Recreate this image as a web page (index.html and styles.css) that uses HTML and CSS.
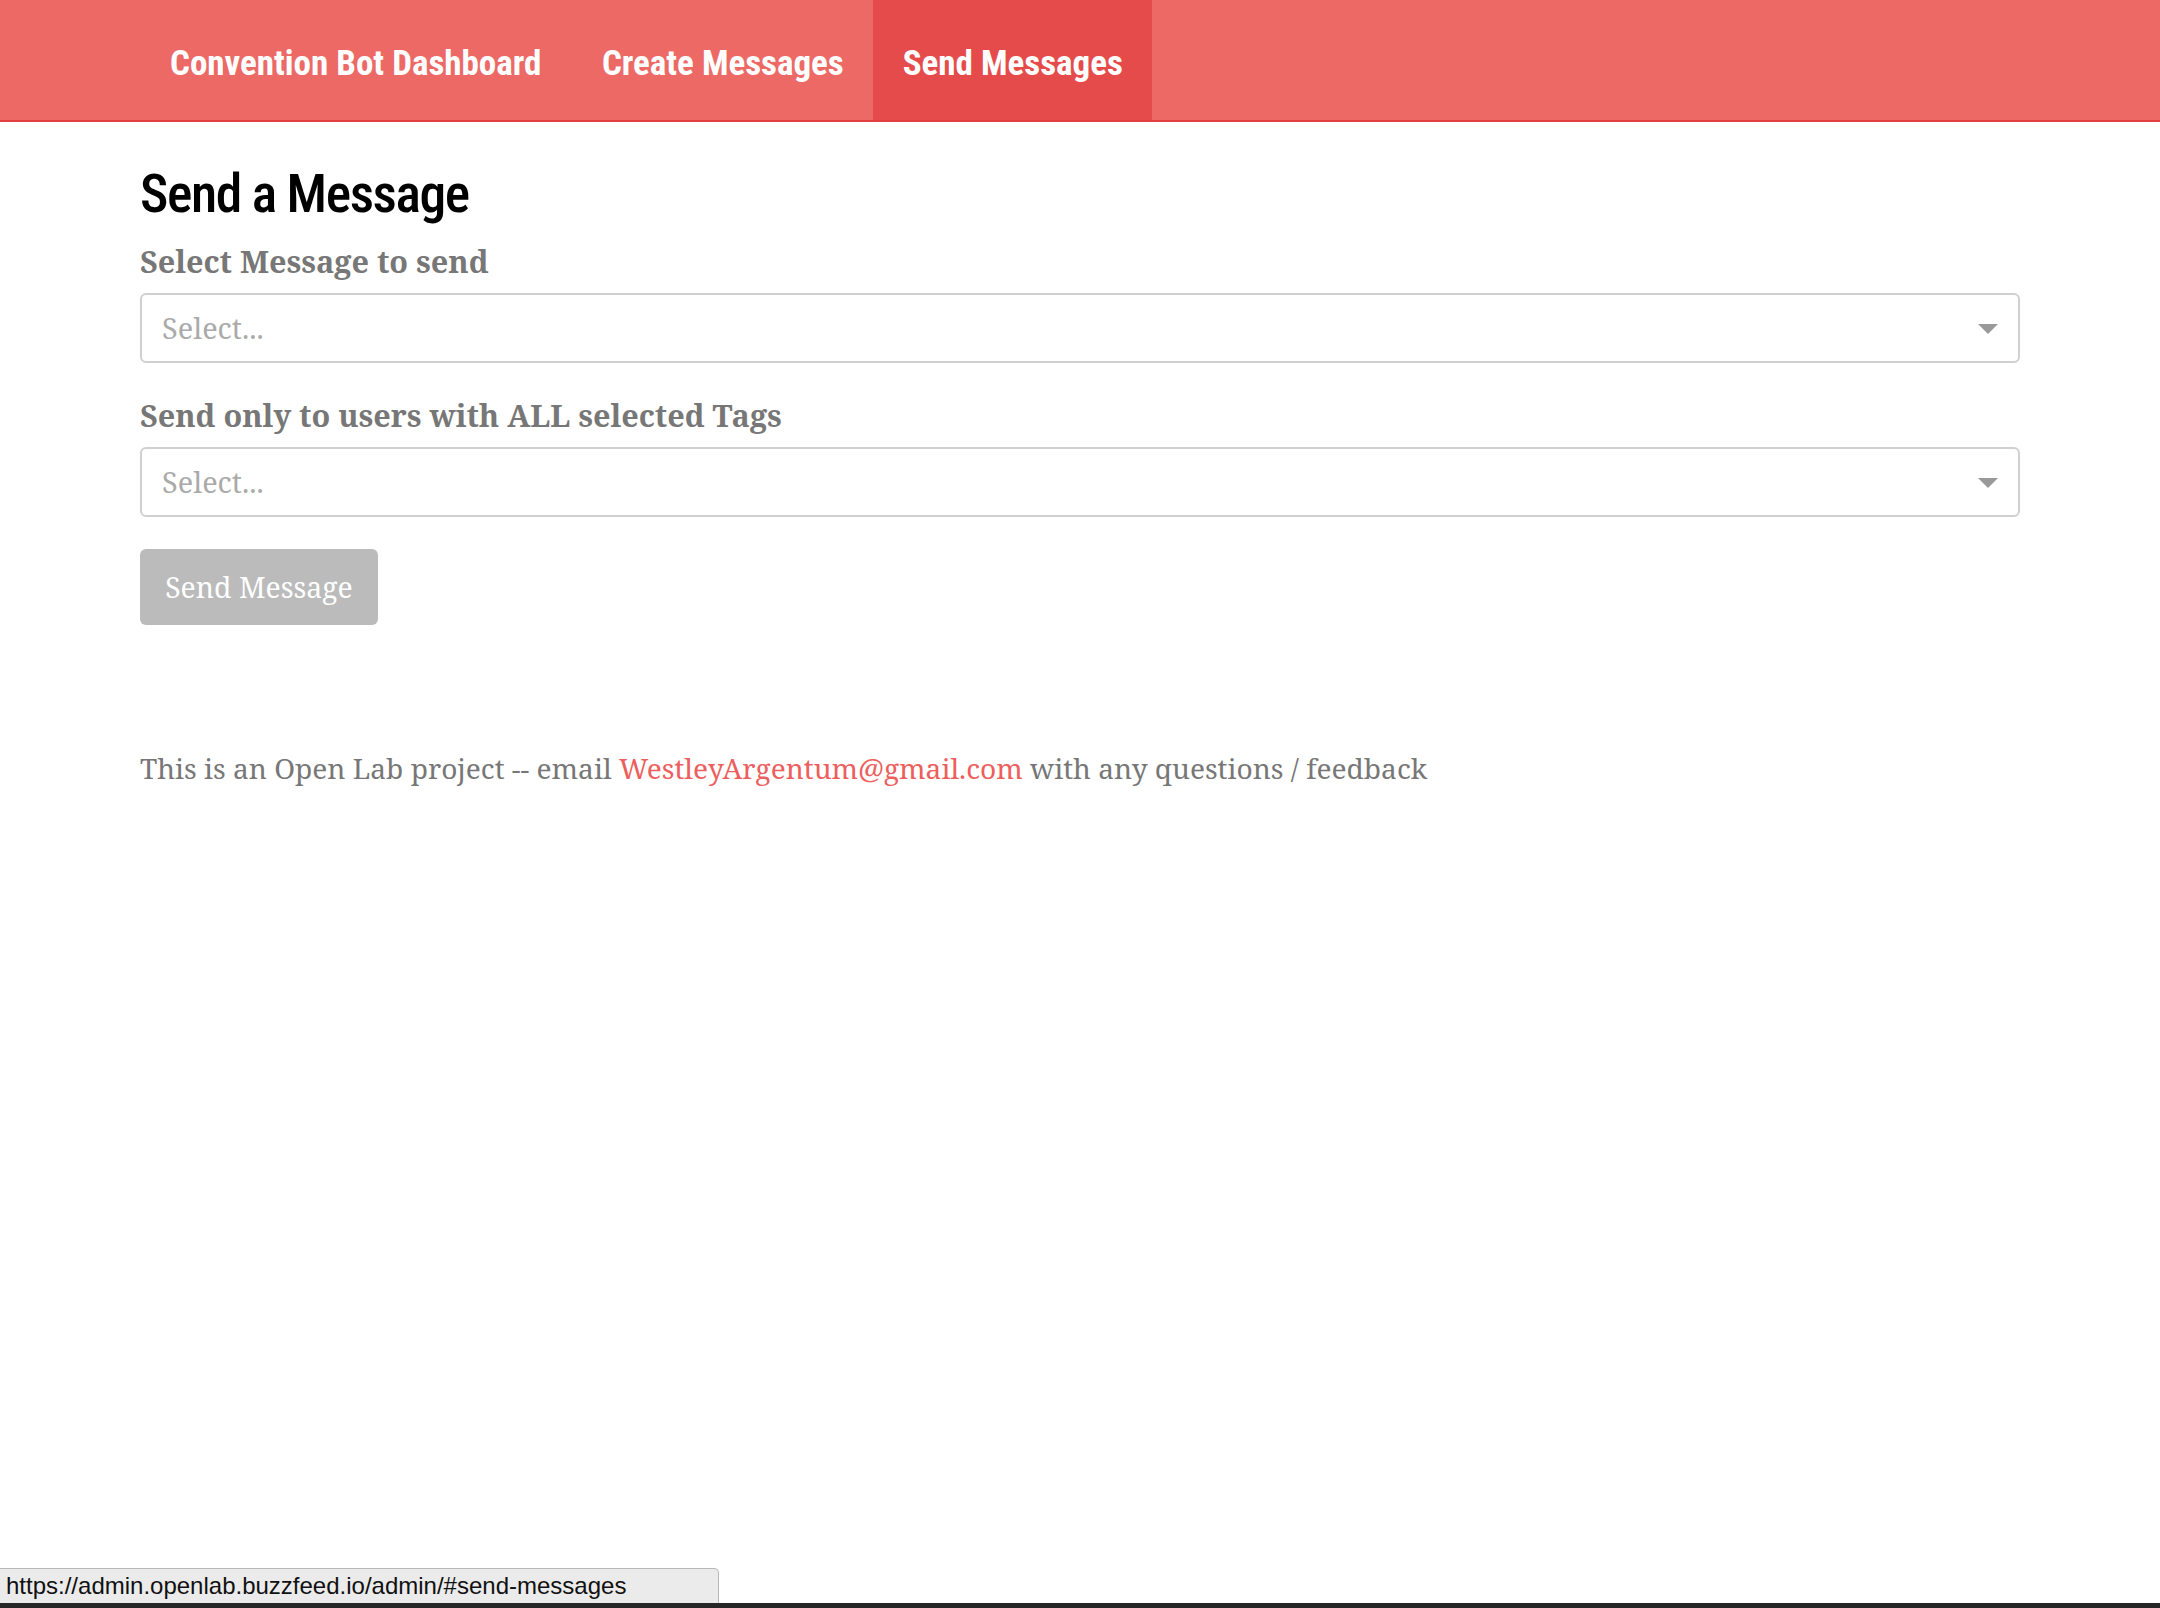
FILE: index.html
```html
<!DOCTYPE html>
<html lang="en">
<head>
<meta charset="utf-8">
<title>Convention Bot Dashboard</title>
<link rel="stylesheet" href="styles.css">
</head>
<body>
<nav class="navbar">
  <div class="nav-inner">
    <a class="nav-link" href="#">Convention Bot Dashboard</a>
    <a class="nav-link" href="#create-messages">Create Messages</a>
    <a class="nav-link active" href="#send-messages">Send Messages</a>
  </div>
</nav>

<main class="content">
  <h1 class="page-title">Send a Message</h1>

  <div class="field">
    <label class="field-label">Select Message to send</label>
    <div class="select-box">
      <span class="placeholder">Select...</span>
      <span class="arrow"></span>
    </div>
  </div>

  <div class="field">
    <label class="field-label">Send only to users with ALL selected Tags</label>
    <div class="select-box">
      <span class="placeholder">Select...</span>
      <span class="arrow"></span>
    </div>
  </div>

  <button class="send-btn" disabled>Send Message</button>

  <p class="footer-note">This is an Open Lab project -- email <a class="mail" href="#">WestleyArgentum@gmail.com</a> with any questions / feedback</p>
</main>

<div class="status-bubble">https://admin.openlab.buzzfeed.io/admin/#send-messages</div>
<div class="bottom-strip"></div>
</body>
</html>
```
FILE: styles.css
```css
html, body {
  margin: 0;
  padding: 0;
  background: #ffffff;
}

body {
  font-family: "Noto Serif", "DejaVu Serif", serif;
  color: #777777;
  min-height: 1608px;
}

/* ---------- navbar ---------- */
.navbar {
  background: #ec6966;
  border-bottom: 2px solid #e2403f;
}

.nav-inner {
  display: flex;
  padding-left: 140px;
  height: 120px;
}

.nav-link {
  display: block;
  padding: 44px 29.5px 36px;
  line-height: 40px;
  font-family: "Roboto Condensed", "Roboto", sans-serif;
  font-weight: 700;
  font-size: 35px;
  color: #ffffff;
  text-decoration: none;
  white-space: nowrap;
}

.nav-link:first-child {
  padding-left: 30px;
  padding-right: 31px;
}

.nav-link.active {
  background: #e54b4a;
}

/* ---------- content ---------- */
.content {
  padding: 0 140px;
}

.page-title {
  margin: 42px 0 0;
  font-family: "Roboto Condensed", "Roboto", sans-serif;
  font-weight: 500;
  font-size: 53.5px;
  letter-spacing: -1.4px;
  line-height: 60px;
  color: #000000;
}

.field {
  display: flex;
  flex-direction: column;
  gap: 14px;
  margin-top: 19px;
}

.field + .field {
  margin-top: 34px;
}

.field-label {
  font-weight: 700;
  font-size: 30.6px;
  line-height: 36px;
  color: #777777;
  white-space: nowrap;
}

.select-box {
  height: 70px;
  box-sizing: border-box;
  border: 2px solid #d0d0d0;
  border-radius: 6px;
  background: #ffffff;
  display: flex;
  align-items: center;
  justify-content: space-between;
  padding: 0 20px 0 20px;
}

.placeholder {
  font-size: 28.9px;
  line-height: 40px;
  color: #aaaaaa;
}

.arrow {
  width: 0;
  height: 0;
  border-left: 10px solid transparent;
  border-right: 10px solid transparent;
  border-top: 10px solid #999999;
  margin-top: 1px;
}

.send-btn {
  display: flex;
  align-items: center;
  justify-content: center;
  margin-top: 32px;
  height: 76px;
  width: 238px;
  padding: 0;
  border: none;
  border-radius: 6px;
  background: #bbbbbb;
  color: #ffffff;
  font-family: "Noto Serif", "DejaVu Serif", serif;
  font-size: 28.4px;
  line-height: 40px;
}

.footer-note {
  margin: 123px 0 0;
  font-size: 28.1px;
  line-height: 40px;
  color: #777777;
  white-space: nowrap;
}

.mail {
  color: #ec5f5e;
  text-decoration: none;
}

/* ---------- browser chrome overlay ---------- */
.status-bubble {
  position: fixed;
  left: 0;
  bottom: 5px;
  width: 719px;
  height: 35px;
  box-sizing: border-box;
  padding-left: 6px;
  background: #ebebeb;
  border-top: 1px solid #b8b8b8;
  border-right: 1px solid #b8b8b8;
  border-top-right-radius: 5px;
  font-family: "Liberation Sans", Arial, sans-serif;
  font-size: 24px;
  line-height: 34px;
  color: #111111;
  white-space: nowrap;
}

.bottom-strip {
  position: fixed;
  left: 0;
  right: 0;
  bottom: 0;
  height: 5px;
  background: #262626;
}
```
